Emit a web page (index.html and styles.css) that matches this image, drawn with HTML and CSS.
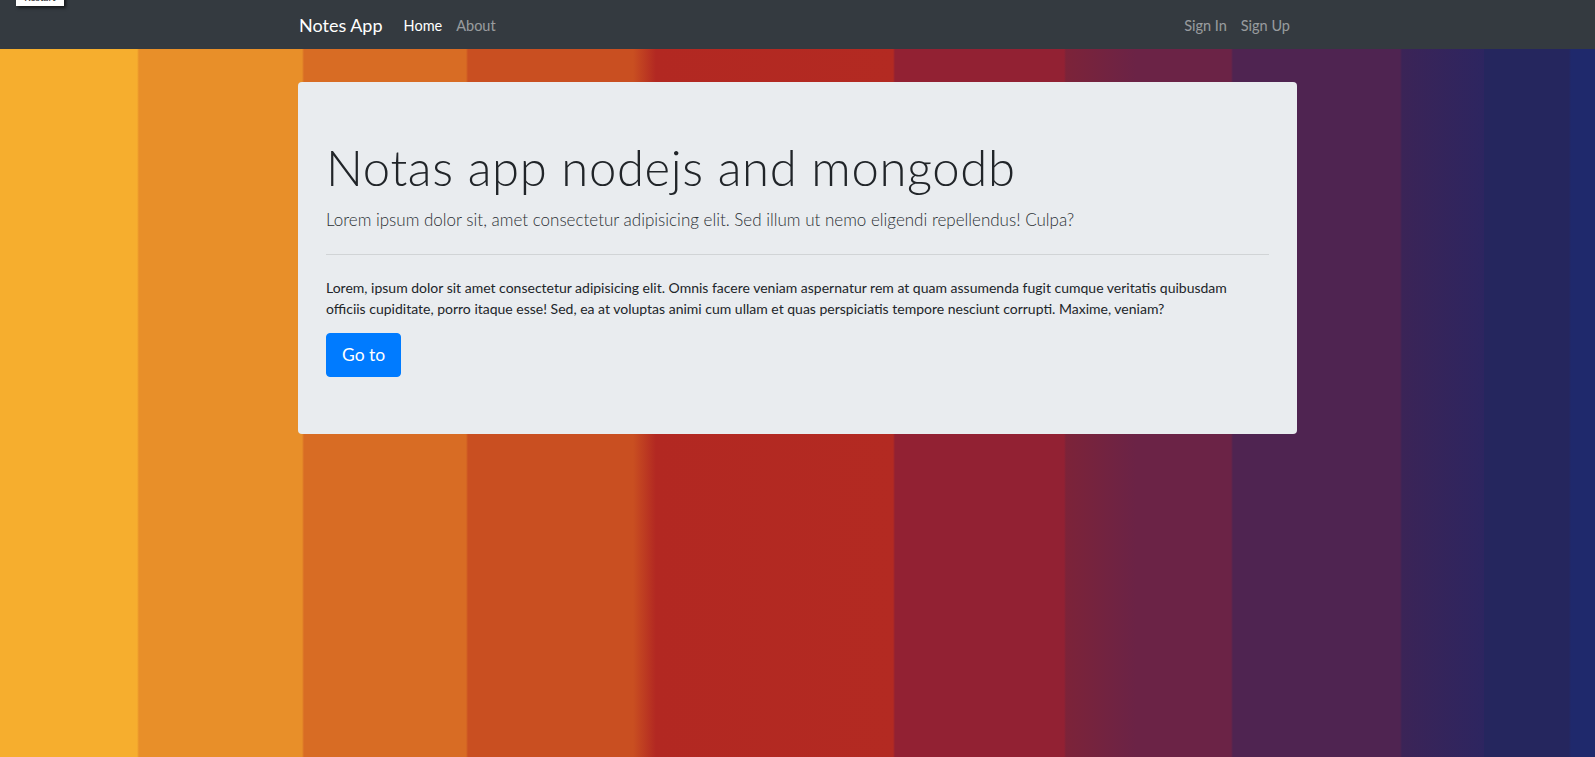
FILE: index.html
```html
<!DOCTYPE html>
<html lang="en">
<head>
<meta charset="utf-8">
<title>Notes App</title>
<link rel="stylesheet" href="styles.css">
</head>
<body>
<div class="restart-tab">Restart</div>
<nav class="navbar">
  <div class="nav-inner">
    <a class="brand" href="#">Notes App</a>
    <ul class="nav-links">
      <li><a class="nav-link active" href="#">Home</a></li>
      <li><a class="nav-link" href="#">About</a></li>
    </ul>
    <ul class="nav-links nav-right">
      <li><a class="nav-link" href="#">Sign In</a></li>
      <li><a class="nav-link" href="#">Sign Up</a></li>
    </ul>
  </div>
</nav>
<main class="page">
  <section class="jumbotron">
    <h1 class="display">Notas app nodejs and mongodb</h1>
    <p class="lead">Lorem ipsum dolor sit, amet consectetur adipisicing elit. Sed illum ut nemo eligendi repellendus! Culpa?</p>
    <hr class="divider">
    <p class="body-text">Lorem, ipsum dolor sit amet consectetur adipisicing elit. Omnis facere veniam aspernatur rem at quam assumenda fugit cumque veritatis quibusdam officiis cupiditate, porro itaque esse! Sed, ea at voluptas animi cum ullam et quas perspiciatis tempore nesciunt corrupti. Maxime, veniam?</p>
    <a class="btn-primary" href="#">Go to</a>
  </section>
</main>
</body>
</html>
```
FILE: styles.css
```css
* { box-sizing: border-box; }

html, body { height: 100%; }

body {
  margin: 0;
  font-family: Lato, "Open Sans", "Liberation Sans", sans-serif;
  color: #212529;
  background-color: #f6ae2e;
  background-image: linear-gradient(to right,
    #f6ae2e 0px, #f6ae2e 137px,
    #e88f29 139px, #e88f29 302px,
    #d86c24 304px, #d86c24 466px,
    #c94f21 468px, #c94f21 633px,
    #b22822 656px, #b32a22 893px,
    #922133 895px, #922133 1064px,
    #7c2339 1066px, #6b2346 1136px,
    #6b2346 1136px, #6b2346 1231px,
    #4f2451 1233px, #4f2451 1400px,
    #3b2457 1402px, #2d2560 1484px,
    #25265e 1484px, #25265e 1569px,
    #1f296c 1571px, #1f296c 1595px);
  background-repeat: no-repeat;
  background-size: 1595px 100%;
  overflow: hidden;
}

.restart-tab {
  position: absolute;
  left: 16px;
  top: -12px;
  width: 48px;
  height: 18px;
  background: #fff;
  color: #222;
  font-size: 10px;
  line-height: 18px;
  text-align: center;
  box-shadow: 2px 2px 3px rgba(0,0,0,.6);
  z-index: 5;
}

.navbar {
  height: 49px;
  background: #343a40;
}

.nav-inner {
  width: 999px;
  height: 100%;
  margin: 0 auto;
  padding-top: 2px;
  display: flex;
  align-items: center;
}

.brand {
  font-size: 18px;
  line-height: 1.5;
  color: #fff;
  text-decoration: none;
  margin-right: 14px;
  padding-left: 1px;
}

.nav-links {
  list-style: none;
  margin: 0;
  padding: 0;
  display: flex;
}

.nav-right { margin-left: auto; }

.nav-link {
  display: block;
  padding: 7px 7px;
  font-size: 14.5px;
  line-height: 1.5;
  color: rgba(255,255,255,.5);
  text-decoration: none;
}

.nav-link.active { color: #fff; }

.page {
  padding-top: 33px;
}

.jumbotron {
  width: 999px;
  margin: 0 auto;
  padding: 56px 28px 57px;
  background: #e9ecef;
  border-radius: 4px;
}

.display {
  font-size: 49px;
  font-weight: 300;
  line-height: 1.2;
  letter-spacing: 0.65px;
  margin: 0 0 10px;
}

.lead {
  font-size: 17px;
  font-weight: 300;
  line-height: 26px;
  margin: 0 0 14px;
  color: #2b3035;
}

.divider {
  margin: 21px 0 22px;
  border: 0;
  border-top: 1px solid rgba(0,0,0,.1);
}

.body-text {
  font-size: 14px;
  line-height: 21px;
  margin: 0 0 14px;
}

.btn-primary {
  display: inline-block;
  font-size: 17.5px;
  line-height: 1.5;
  padding: 8px 15px;
  border: 1px solid #007bff;
  border-radius: 4px;
  background: #007bff;
  color: #fff;
  text-decoration: none;
}
```
